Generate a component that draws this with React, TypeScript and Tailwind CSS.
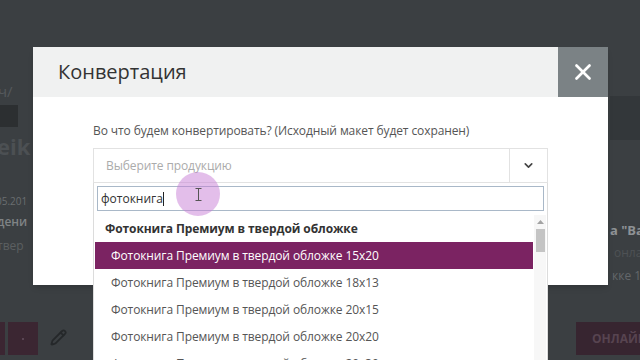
import { X, ChevronDown, Pencil } from 'lucide-react';

const sizes = ['15x20', '18x13', '20x15', '20x20', '20x30'];

export default function App() {
  return (
    <div className="relative w-[640px] h-[360px] overflow-hidden bg-[#3b3f42] font-['Open_Sans',sans-serif]">
      {/* BACKGROUND PAGE (dimmed by overlay) */}
      <div className="flex flex-col h-full">
        <div className="flex h-[320px]">
          <div className="w-[33px] overflow-hidden flex flex-col pt-[82px] whitespace-nowrap">
            <span className="text-[15px] leading-[18px] text-[#55595c] -ml-[2px]">ч/</span>
            <div className="mt-[5px] w-[18px] h-[22px] bg-[#2c2f31]" />
            <span className="mt-[6px] text-[22px] leading-[26px] font-bold text-[#4c5053] -ml-[3px]">eik</span>
            <span className="mt-[36px] text-[10px] leading-[12px] text-[#6a6e70] -ml-[4px]">05.201</span>
            <span className="mt-[8px] text-[12px] leading-[14px] font-semibold text-[#7f8385] -ml-[3px]">дени</span>
            <span className="mt-[10px] text-[12px] leading-[14px] text-[#5b5f61] -ml-[3px]">твер</span>
          </div>
          <div className="flex-1" />
          <div className="w-[32px] overflow-hidden flex flex-col pt-[96px] whitespace-nowrap">
            <div className="w-[30px] h-[44px] ml-[2px] bg-[#33373a]" />
            <span className="mt-[82px] pl-[2px] text-[13px] leading-[16px] font-bold text-[#8e9295]">а "Ва</span>
            <span className="mt-[8px] pl-[6px] text-[12px] leading-[14px] text-[#4e5255]">онлай</span>
            <span className="mt-[9px] pl-[4px] text-[12px] leading-[14px] text-[#63676a]">кке 1</span>
          </div>
        </div>
        <div className="flex items-start pt-[2px] h-[40px]">
          <div className="w-[5px] h-[33px] bg-[#3b2632]" />
          <div className="ml-[3px] w-[30px] h-[33px] bg-[#3b2632] flex items-center justify-center">
            <span className="w-[2px] h-[2px] bg-[#5a4553]" />
          </div>
          <Pencil className="ml-[12px] mt-[7px] w-[17px] h-[17px] text-[#25282a]" strokeWidth={2.5} />
          <div className="flex-1" />
          <div className="w-[64px] h-[33px] bg-[#372530] flex items-center pl-[16px] text-[12px] font-bold text-[#574450] whitespace-nowrap overflow-hidden">
            ОНЛАЙН
          </div>
        </div>
      </div>

      {/* MODAL */}
      <div className="absolute left-[33px] top-[47px] w-[575px] h-[238px] bg-white shadow-md">
        <header className="flex h-[50px] bg-[#f0f1f1]">
          <h2 className="flex-1 flex items-center pl-[25px] text-[20px] text-[#333] font-normal">Конвертация</h2>
          <button className="w-[50px] h-[50px] bg-[#7b8285] flex items-center justify-center">
            <X className="w-[26px] h-[26px] text-white" strokeWidth={2.5} />
          </button>
        </header>

        <div className="px-[60px] pt-[25px]">
          <p className="text-[12px] leading-[18px] text-[#555] tracking-[-0.1px]">
            Во что будем конвертировать? (Исходный макет будет сохранен)
          </p>

          <div className="relative mt-[8px]">
            <div className="flex h-[35px] border border-[#e2e2e2]">
              <div className="flex-1 flex items-center pl-[12px] text-[12px] text-[#ababab] tracking-[-0.1px]">Выберите продукцию</div>
              <div className="w-[38px] border-l border-[#e2e2e2] flex items-center justify-center">
                <ChevronDown className="w-[13px] h-[13px] text-[#444]" strokeWidth={3} />
              </div>
            </div>

            {/* DROPDOWN */}
            <div className="absolute top-[35px] left-0 right-0 bg-white border border-t-0 border-[#dcdcdc] px-[1px] pt-[3px] z-10">
              <div className="mx-[2px] h-[25px] border border-[#a9b8c8] flex items-center pl-[3px] text-[12px] text-[#333]">
                фотокнига<span className="w-[1px] h-[14px] bg-[#222]" />
              </div>
              <div className="flex mt-[4px] tracking-[-0.1px]">
                <div className="flex-1 mr-[1px]">
                  <div className="h-[27px] flex items-center pl-[10px] text-[12px] font-bold text-[#333]">
                    Фотокнига Премиум в твердой обложке
                  </div>
                  {sizes.map((s, i) => (
                    <div
                      key={s}
                      className={`h-[27px] flex items-center pl-[16px] text-[12px] ${
                        i === 0 ? 'bg-[#7b2362] text-white' : 'text-[#555]'
                      }`}
                    >
                      Фотокнига Премиум в твердой обложке {s}
                    </div>
                  ))}
                </div>
                <div className="w-[12px] bg-[#f7f7f7] flex flex-col items-center pt-[5px]">
                  <svg width="7" height="4" viewBox="0 0 7 4">
                    <path d="M0 4 L3.5 0 L7 4 Z" fill="#a3a3a3" />
                  </svg>
                  <div className="mt-[5px] w-[9px] h-[23px] bg-[#c4c4c4]" />
                </div>
              </div>
            </div>
          </div>
        </div>
      </div>

      {/* cursor highlight */}
      <div className="absolute left-[176px] top-[172px] w-[44px] h-[44px] rounded-full bg-[#c77dd6]/50 flex items-center justify-center z-20">
        <svg width="7" height="13" viewBox="0 0 7 13">
          <path d="M0.5 0.5 H6.5 M3.5 0.5 V12.5 M0.5 12.5 H6.5" stroke="#555" strokeWidth="1" fill="none" />
        </svg>
      </div>
    </div>
  );
}
